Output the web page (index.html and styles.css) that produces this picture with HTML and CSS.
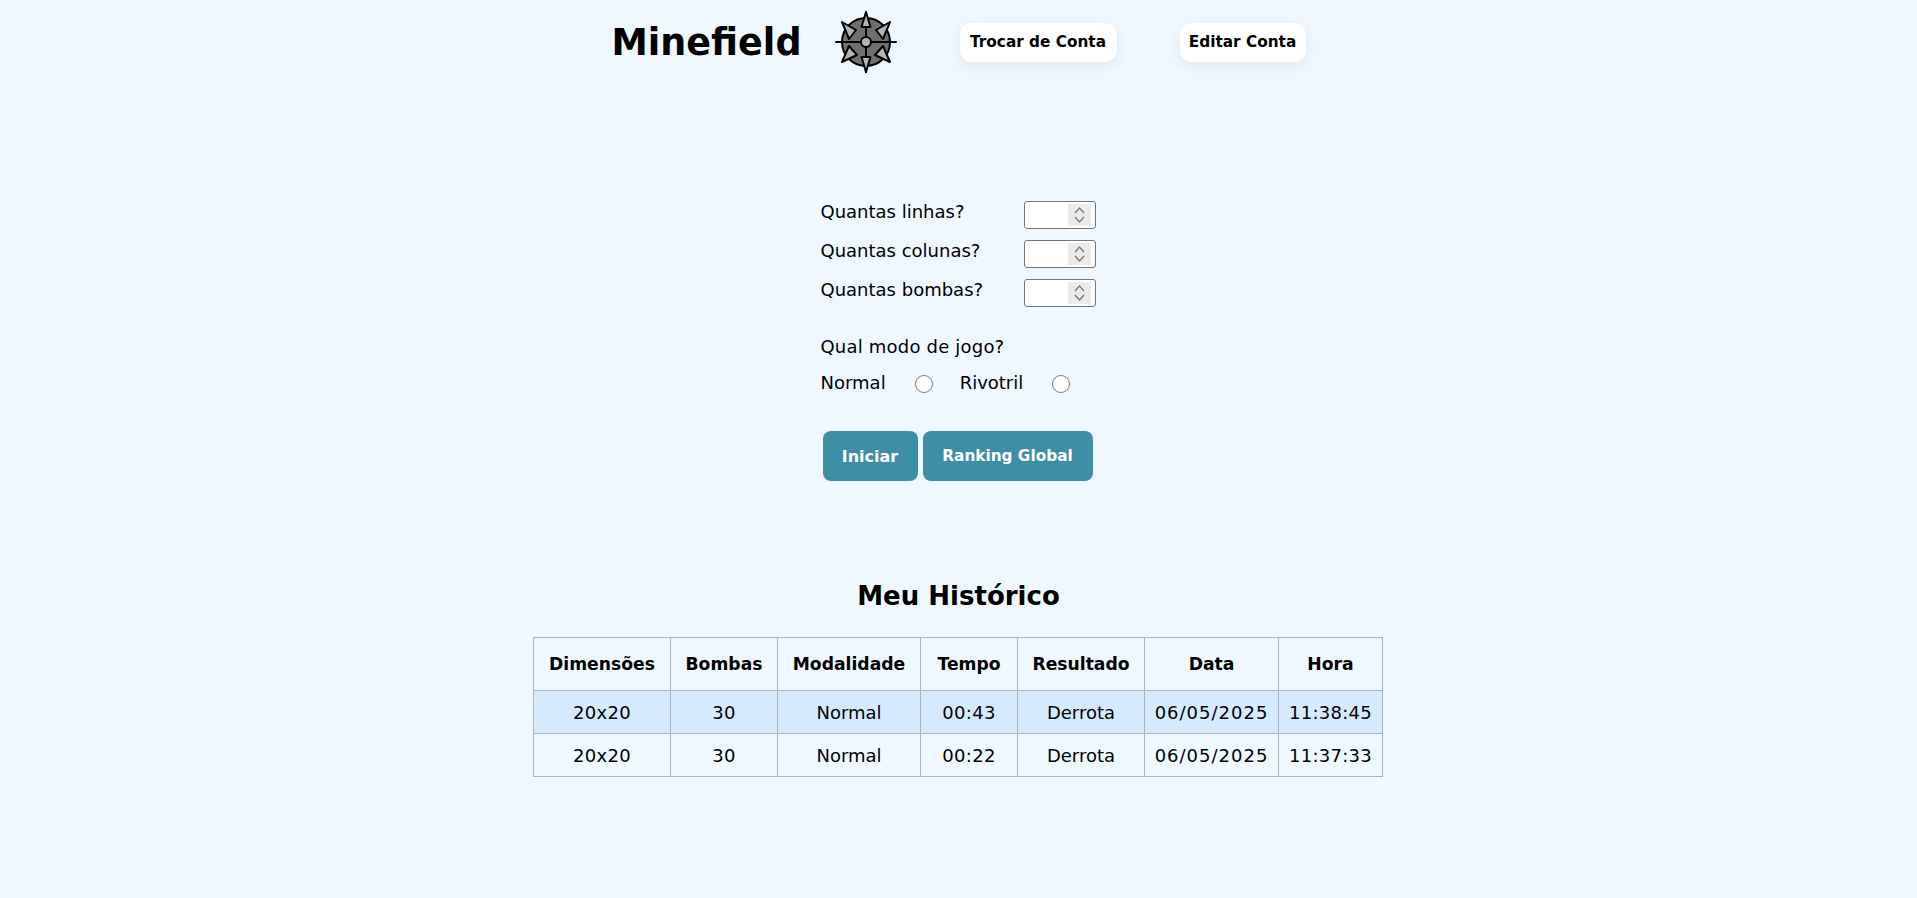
FILE: index.html
```html
<!DOCTYPE html>
<html lang="pt-BR">
<head>
  <meta charset="UTF-8">
  <title>Minefield</title>
  <link rel="stylesheet" href="styles.css">
</head>
<body>

  <header class="topo">
    <h1>Minefield</h1>
    <svg class="mina" viewBox="0 0 62 62" width="62" height="62" aria-hidden="true">
      <circle cx="31" cy="31" r="24" fill="#707070" stroke="#000" stroke-width="2"/>
      <path d="M31 1V61M1 31H61" stroke="#000" stroke-width="2" stroke-linecap="round"/>
      <g fill="#b4b4b4" stroke="#000" stroke-width="2" stroke-linejoin="round">
        <path d="M31 1L26.5 16H35.500Z"/>
        <path d="M31 61L26.500 46H35.500Z"/>
        <path d="M7 11L21 19L14 28Z"/>
        <path d="M55 11L41 19L48 28Z"/>
        <path d="M7 51L14 35L22 44Z"/>
        <path d="M55 51L48 35L40 44Z"/>
      </g>
      <circle cx="31" cy="31" r="5" fill="#b4b4b4" stroke="#000" stroke-width="2"/>
    </svg>
    <a class="btn-conta trocar" href="#">Trocar de Conta</a>
    <a class="btn-conta editar" href="#">Editar Conta</a>
  </header>

  <form class="config">
    <label class="campo">Quantas linhas?
      <span class="numero">
        <input type="number" name="linhas">
        <svg class="spin" viewBox="0 0 23 22" width="23" height="22" aria-hidden="true"><path d="M7 9L11.500 4L16 9M7 13L11.500 18L16 13"/></svg>
      </span>
    </label>
    <label class="campo">Quantas colunas?
      <span class="numero">
        <input type="number" name="colunas">
        <svg class="spin" viewBox="0 0 23 22" width="23" height="22" aria-hidden="true"><path d="M7 9L11.500 4L16 9M7 13L11.500 18L16 13"/></svg>
      </span>
    </label>
    <label class="campo">Quantas bombas?
      <span class="numero">
        <input type="number" name="bombas">
        <svg class="spin" viewBox="0 0 23 22" width="23" height="22" aria-hidden="true"><path d="M7 9L11.500 4L16 9M7 13L11.500 18L16 13"/></svg>
      </span>
    </label>

    <p class="pergunta">Qual modo de jogo?</p>
    <div class="modos">
      <label>Normal <input type="radio" name="modo" value="normal"></label>
      <label>Rivotril <input type="radio" name="modo" value="rivotril"></label>
    </div>

    <div class="acoes">
      <button type="submit" class="iniciar">Iniciar</button>
      <button type="button" class="ranking">Ranking Global</button>
    </div>
  </form>

  <h2>Meu Histórico</h2>
  <table>
    <thead>
      <tr>
        <th>Dimensões</th>
        <th>Bombas</th>
        <th>Modalidade</th>
        <th>Tempo</th>
        <th>Resultado</th>
        <th>Data</th>
        <th>Hora</th>
      </tr>
    </thead>
    <tbody>
      <tr class="par">
        <td class="num">20x20</td>
        <td class="num">30</td>
        <td>Normal</td>
        <td class="num">00:43</td>
        <td>Derrota</td>
        <td class="data">06/05/2025</td>
        <td class="num">11:38:45</td>
      </tr>
      <tr>
        <td class="num">20x20</td>
        <td class="num">30</td>
        <td>Normal</td>
        <td class="num">00:22</td>
        <td>Derrota</td>
        <td class="data">06/05/2025</td>
        <td class="num">11:37:33</td>
      </tr>
    </tbody>
  </table>

</body>
</html>
```

FILE: styles.css
```css
* { box-sizing: border-box; }
body { margin: 0; background: #f0f8ff; color: #000; font-family: "DejaVu Sans", sans-serif; font-size: 18px; }

.topo { display: flex; align-items: center; justify-content: center; height: 84px; }
.topo h1 { margin: 0 33px 0 0; font-size: 36.500px; font-weight: bold; }
.mina { margin-right: 63px; }
.btn-conta { height: 39px; line-height: 38px; background: white; border-radius: 12px; color: #000; font-size: 15.300px; font-weight: bold; text-align: center; text-decoration: none; box-shadow: 0 4px 14px rgba(0,0,0,0.07); }
.trocar { width: 157px; margin-right: 63px; }
.editar { width: 126px; }

.config { width: 276px; margin: 117px auto 0; }
.campo { display: flex; align-items: flex-start; justify-content: space-between; height: 28px; padding-right: 1px; margin-bottom: 11px; line-height: 22px; }
.numero { position: relative; display: block; width: 72px; height: 28px; }
.numero input { display: block; width: 100%; height: 100%; padding: 1px 2px; background: white; border: 1px solid #767676; border-radius: 3px; appearance: textfield; }
.spin { position: absolute; top: 3px; right: 5px; background: #ebebeb; fill: none; stroke: #777; stroke-width: 1.300; }
.pergunta { margin: 26px 0 0; line-height: 28px; letter-spacing: 0.200px; }
.modos { display: flex; gap: 27px; margin-top: 7px; height: 28px; align-items: center; }
.modos label { display: flex; align-items: center; gap: 29px; }
.modos input { width: 18px; height: 18px; margin: 3px 0 0; }
.acoes { display: flex; gap: 5px; margin: 35px 0 0 2px; }
.acoes button { height: 50px; padding: 0; background: #3f8ea8; color: white; border: none; border-radius: 8px; font-family: inherit; font-size: 16px; font-weight: bold; white-space: nowrap; cursor: pointer; }
.iniciar { width: 95px; }
.acoes .ranking { width: 170px; font-size: 15.300px; }

h2 { margin: 95px 0 0; text-align: center; font-size: 26px; font-weight: bold; line-height: 40px; }

table { margin: 21px 0 0 533px; width: 849px; border-collapse: collapse; table-layout: fixed; text-align: center; }
th, td { border: 1px solid #a9b4c2; padding: 0; }
th { height: 53px; font-size: 17.200px; font-weight: bold; }
td { height: 43px; }
th:nth-child(1) { width: 137px; }
th:nth-child(2) { width: 107px; }
th:nth-child(3) { width: 143px; }
th:nth-child(4) { width: 97px; }
th:nth-child(5) { width: 127px; }
th:nth-child(6) { width: 134px; }
th:nth-child(7) { width: 104px; }
.par td { background: #d6eaff; }
.num { letter-spacing: 0.300px; }
.data { letter-spacing: 1px; }
```
